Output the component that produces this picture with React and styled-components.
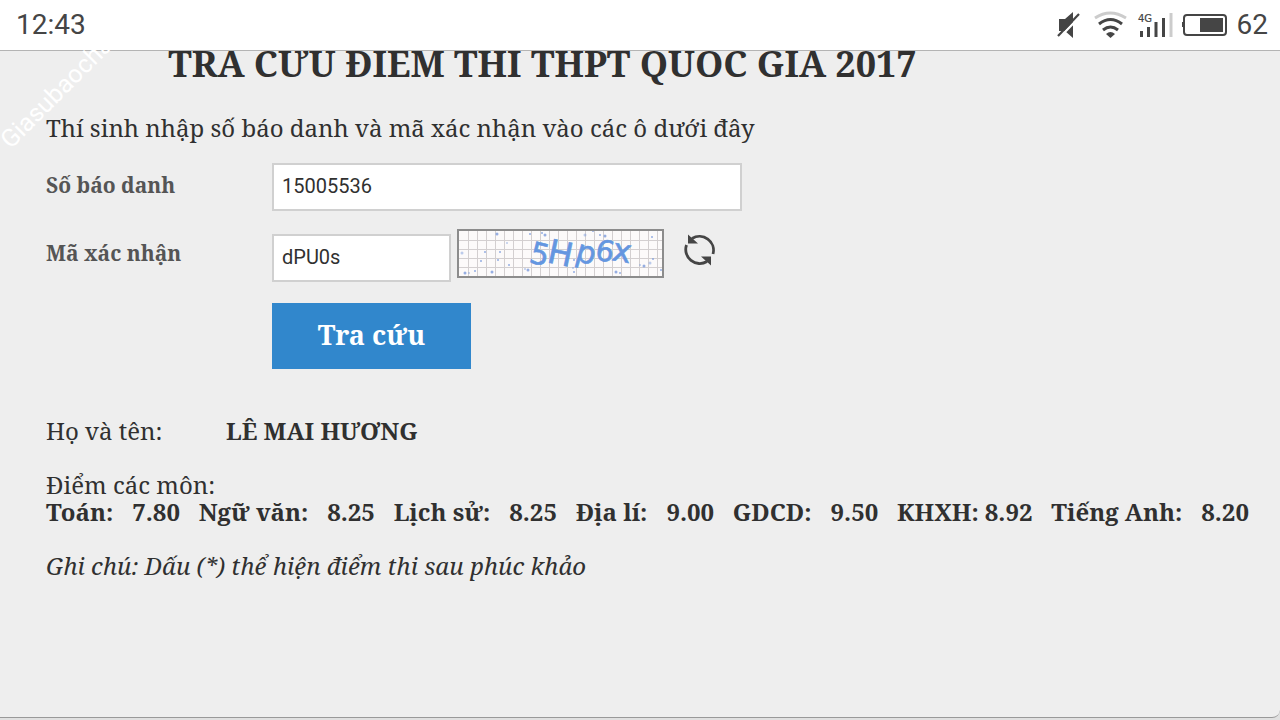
import React from "react";
import styled, { createGlobalStyle } from "styled-components";

const serif = `"Noto Serif", "Droid Serif", "DejaVu Serif Condensed", "DejaVu Serif", serif`;
const sans = `Roboto, "Noto Sans", sans-serif`;

const GlobalStyle = createGlobalStyle`
  *, *::before, *::after { box-sizing: border-box; }
  body { margin: 0; background: #e0e0e0; }
`;

const Screen = styled.div`
  position: relative;
  min-height: 100vh;
  display: flex;
  flex-direction: column;
  overflow: hidden;
  font-family: ${serif};
  color: #303030;
`;

const StatusBar = styled.header`
  position: relative;
  z-index: 1;
  height: 51px;
  padding: 0 12px 0 16px;
  display: flex;
  align-items: center;
  justify-content: space-between;
  background: #fff;
  border-bottom: 1px solid #b4b4b4;
  font: 28px/32px ${sans};
  color: #454545;
`;

const StatusIcons = styled.div`
  display: flex;
  align-items: center;
`;

const StatusGlyphs = styled.svg`
  display: block;
  margin-right: 9px;
`;

const Watermark = styled.div`
  position: absolute;
  z-index: 2;
  left: 15px;
  top: 126px;
  transform-origin: 0 100%;
  transform: rotate(-45deg);
  font: 25px/28px ${sans};
  color: #fff;
`;

const Page = styled.main`
  flex: 1;
  padding: 0 0 40px 46px;
  margin-bottom: 2px;
  background: #eee;
  border-bottom: 1px solid #999;
  border-bottom-right-radius: 8px;
`;

const Title = styled.h1`
  max-width: 993px;
  margin: 0;
  text-align: center;
  font-size: 36px;
  line-height: 26px;
  font-weight: 700;
`;

const Intro = styled.p`
  margin: 35px 0 20px;
  font-size: 24px;
  line-height: 31px;
`;

const Form = styled.form`
  display: flex;
  flex-direction: column;
`;

const Field = styled.div`
  display: flex;
  align-items: flex-end;
  min-height: ${(p) => p.$height}px;
  margin-bottom: ${(p) => p.$gap}px;
`;

const Label = styled.label`
  align-self: center;
  width: 226px;
  padding-bottom: 5px;
  font-size: 21px;
  line-height: 28px;
  font-weight: 700;
  color: #555;
`;

const TextInput = styled.input`
  width: ${(p) => p.$width}px;
  height: 48px;
  padding: 0 8px 2px;
  border: 2px solid #d0d0d0;
  border-radius: 0;
  background: #fff;
  font: 20px/24px ${sans};
  color: #303030;
`;

const CaptchaGroup = styled.div`
  align-self: flex-start;
  display: flex;
  align-items: center;
  gap: 19px;
  margin-left: 6px;
`;

const Captcha = styled.svg`
  display: block;
`;

const RefreshButton = styled.button`
  padding: 0 0 7px;
  border: 0;
  background: none;
  line-height: 0;
`;

const SubmitButton = styled.button`
  align-self: flex-start;
  margin-left: 226px;
  width: 199px;
  height: 66px;
  padding: 0 0 2px;
  border: 0;
  background: #3187cc;
  color: #fff;
  font: 700 27px/36px ${serif};
`;

const Results = styled.section`
  margin-top: 48px;
  font-size: 24px;
  line-height: 27px;
`;

const NameRow = styled.div`
  display: flex;
  margin-bottom: 27px;
`;

const NameLabel = styled.span`
  width: 180px;
`;

const Scores = styled.div`
  display: flex;
  justify-content: space-between;
  padding-right: 31px;
  margin-bottom: 27px;
  white-space: nowrap;
  font-weight: 700;
`;

const Score = styled.span`
  display: flex;
  gap: ${(p) => (p.$tight ? 6 : 19)}px;
`;

const Note = styled.em`
  display: block;
`;

const scores = [
  ["Toán:", "7.80"],
  ["Ngữ văn:", "8.25"],
  ["Lịch sử:", "8.25"],
  ["Địa lí:", "9.00"],
  ["GDCD:", "9.50"],
  ["KHXH:", "8.92", true],
  ["Tiếng Anh:", "8.20"],
];

const specks = [
  [5, 24], [28, 23], [43, 23], [8, 44], [12, 44], [18, 42], [35, 43], [52, 36],
  [68, 40], [71, 41], [73, 5], [85, 4], [128, 6], [136, 2], [143, 6], [148, 7],
  [116, 39], [117, 43], [159, 43], [163, 44], [183, 36], [187, 37], [195, 8], [196, 30],
  [193, 34], [24, 32], [41, 31], [40, 5], [50, 14], [204, 41], [88, 6], [117, 31],
];

function StatusIconSet() {
  return (
    <StatusGlyphs width="172" height="30" viewBox="0 0 172 30" aria-hidden="true">
      <path d="M3 9h6l8-7v26l-8-7H3z" fill="#454545" />
      <path d="M3.500 27.500 24.500 6" stroke="#fff" strokeWidth="2.500" />
      <path d="M2 26 23 4" stroke="#454545" strokeWidth="2.200" />
      <g fill="none" strokeWidth="3">
        <path d="M39 8q15-10 31 0" stroke="#ccc" />
        <path d="M43 14q11.500-9 23 0M47 20q7.500-6 15 0" stroke="#454545" />
      </g>
      <path d="M50 24q4.500-4 9 0l-4.500 4z" fill="#454545" />
      <text x="82" y="12" fontFamily="DejaVu Sans, sans-serif" fontSize="10" fill="#454545" stroke="#454545" strokeWidth="0.200">4G</text>
      <path d="M85.500 27v-6M92.500 27V17M100 27V12M107.500 27V8" stroke="#454545" strokeWidth="3" />
      <path d="M115 27V3" stroke="#ccc" strokeWidth="3" />
      <rect x="128" y="5" width="42" height="20" rx="3" fill="none" stroke="#454545" strokeWidth="2" />
      <rect x="126" y="12" width="2" height="5" fill="#454545" />
      <rect x="144" y="8" width="23" height="14" fill="#454545" />
    </StatusGlyphs>
  );
}

function CaptchaImage() {
  const letters = [
    ["5", 71, 33, 14, 30], ["H", 89, 33, 12, 33], ["p", 117, 31, 16, 31], ["6", 137, 30, 12, 29], ["x", 154, 31, 10, 32],
  ];
  return (
    <Captcha width="207" height="49" viewBox="0 0 207 49" role="img" aria-label="5Hp6x">
      <rect width="207" height="49" fill="#fcfafa" />
      {Array.from({ length: 22 }, (_, i) => (
        <path key={`v${i}`} d={`M${11.5 + i * 9} 1v47`} stroke="#d3cfd0" />
      ))}
      {Array.from({ length: 4 }, (_, i) => (
        <path key={`h${i}`} d={`M1 ${11.5 + i * 9}h205`} stroke="#d3cfd0" />
      ))}
      {specks.map(([x, y], i) => (
        <circle key={i} cx={x} cy={y} r={i % 3 ? 1 : 1.5} fill="#7c9bdc" opacity={i % 4 ? 0.8 : 0.5} />
      ))}
      <g fontFamily="DejaVu Sans, sans-serif" fill="#6496e0" stroke="#6496e0" strokeWidth="0.600">
        {letters.map(([c, x, y, r, size]) => (
          <text key={c} x={x} y={y} fontSize={size} transform={`rotate(${r} ${x} ${y})`}>{c}</text>
        ))}
      </g>
      <rect x="1" y="1" width="205" height="47" fill="none" stroke="#8c8c8c" strokeWidth="2" />
    </Captcha>
  );
}

export default function App() {
  return (
    <Screen>
      <GlobalStyle />
      <StatusBar>
        <span>12:43</span>
        <StatusIcons>
          <StatusIconSet />
          <span>62</span>
        </StatusIcons>
      </StatusBar>
      <Watermark>Giasubaocha</Watermark>
      <Page>
        <Title>TRA CỨU ĐIỂM THI THPT QUỐC GIA 2017</Title>
        <Intro>Thí sinh nhập số báo danh và mã xác nhận vào các ô dưới đây</Intro>
        <Form onSubmit={(e) => e.preventDefault()}>
          <Field $height={48} $gap={18}>
            <Label htmlFor="sbd">Số báo danh</Label>
            <TextInput id="sbd" $width={470} defaultValue="15005536" />
          </Field>
          <Field $height={53} $gap={21}>
            <Label htmlFor="code">Mã xác nhận</Label>
            <TextInput id="code" $width={179} defaultValue="dPU0s" />
            <CaptchaGroup>
              <CaptchaImage />
              <RefreshButton type="button" aria-label="Đổi mã">
                <svg width="34" height="34" viewBox="0 0 34 34" fill="none" stroke="#454545" strokeWidth="2.800">
                  <path d="M9 5.500A14 14 0 0 1 30 21M24 28.500A14 14 0 0 1 3.500 12" />
                  <path d="M5 1.500v9h10zM28 32.500v-9h-10z" fill="#454545" stroke="none" />
                </svg>
              </RefreshButton>
            </CaptchaGroup>
          </Field>
          <SubmitButton type="submit">Tra cứu</SubmitButton>
        </Form>
        <Results>
          <NameRow>
            <NameLabel>Họ và tên:</NameLabel>
            <strong>LÊ MAI HƯƠNG</strong>
          </NameRow>
          <div>Điểm các môn:</div>
          <Scores>
            {scores.map(([name, value, tight]) => (
              <Score key={name} $tight={tight}>
                <span>{name}</span>
                <span>{value}</span>
              </Score>
            ))}
          </Scores>
          <Note>Ghi chú: Dấu (*) thể hiện điểm thi sau phúc khảo</Note>
        </Results>
      </Page>
    </Screen>
  );
}
